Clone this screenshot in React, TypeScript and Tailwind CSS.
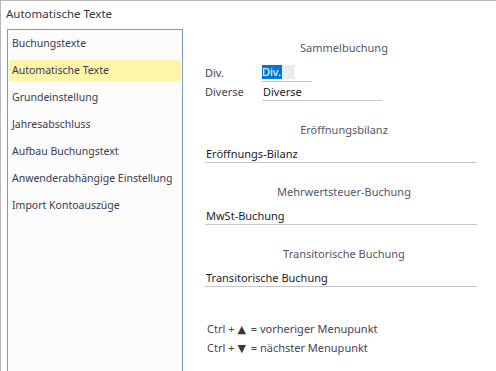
import React from 'react';

const menuItems = [
  'Buchungstexte',
  'Automatische Texte',
  'Grundeinstellung',
  'Jahresabschluss',
  'Aufbau Buchungstext',
  'Anwenderabhängige Einstellung',
  'Import Kontoauszüge',
];

const SectionTitle: React.FC<{ title: string; className?: string }> = ({ title, className = '' }) => (
  <div className={`h-[16px] w-[278px] shrink-0 text-center leading-[16px] text-[#555566] ${className}`}>{title}</div>
);

const Field: React.FC<{ value: string; className?: string }> = ({ value, className = '' }) => (
  <div className={`flex h-[19px] w-[272px] shrink-0 items-end border-b border-[#c6c6c6] text-[#1b1b2b] ${className}`}>
    <span className="pl-[1px] leading-[16px]">{value}</span>
  </div>
);

const Arrow: React.FC<{ glyph: string }> = ({ glyph }) => (
  <span className="ml-[3px] mr-[2px] font-['DejaVu_Sans',sans-serif] text-[11px] text-[#3a3a3a]">{glyph}</span>
);

export default function App() {
  return (
    <div className="flex h-[371px] w-[496px] flex-col overflow-hidden border-t border-l border-[#b8b8b8] bg-white font-['Noto_Sans',sans-serif] text-[11px] whitespace-nowrap">
      {/* Window caption */}
      <div className="h-[28px] shrink-0 pl-[5px] pt-[5px] text-[11.5px] leading-[16px] text-[#333344]">Automatische Texte</div>

      <div className="flex min-h-0 flex-1">
        {/* Menu list */}
        <div className="ml-[6px] w-[176px] shrink-0 border border-b-0 border-[#7a99c2] bg-[#fcfcfc] text-[10.5px]">
          {menuItems.map((item, i) => (
            <div key={item} className="flex h-[27px] items-center px-[1px]">
              <div
                className={`flex h-[21px] w-full items-center rounded-[2px] px-[3px] text-[#3a3a50] ${
                  i === 1 ? 'bg-[#fff5a8]' : ''
                }`}
              >
                {item}
              </div>
            </div>
          ))}
        </div>

        {/* Settings panel */}
        <div className="flex flex-col pl-[22px]">
          <SectionTitle title="Sammelbuchung" className="mt-[11px]" />

          <div className="mt-[7px] flex h-[19px] shrink-0 items-end">
            <span className="w-[57px] pb-[1px] leading-[16px] text-[#444455]">Div.</span>
            <div className="flex h-[19px] w-[50px] items-end border-b border-[#c6c6c6]">
              <div className="mb-[2px] flex h-[14px] w-[33px] items-center bg-[#ececec]">
                <span className="h-[14px] bg-[#0078d7] pr-[1px] leading-[14px] text-white">Div.</span>
              </div>
            </div>
          </div>
          <div className="flex h-[19px] shrink-0 items-end">
            <span className="w-[57px] pb-[1px] leading-[16px] text-[#444455]">Diverse</span>
            <div className="flex h-[19px] w-[120px] items-end border-b border-[#c6c6c6] text-[#1b1b2b]">
              <span className="pl-[1px] leading-[16px]">Diverse</span>
            </div>
          </div>

          <SectionTitle title="Eröffnungsbilanz" className="mt-[21px]" />
          <Field value="Eröffnungs-Bilanz" className="mt-[6px]" />

          <SectionTitle title="Mehrwertsteuer-Buchung" className="mt-[21px]" />
          <Field value="MwSt-Buchung" className="mt-[6px]" />

          <SectionTitle title="Transitorische Buchung" className="mt-[21px]" />
          <Field value="Transitorische Buchung" className="mt-[6px]" />

          <div className="mt-[32px] shrink-0 pl-[2px] text-[#444455]">
            <div className="h-[19px] leading-[19px]">
              Ctrl +<Arrow glyph="▲" /> = vorheriger Menupunkt
            </div>
            <div className="h-[19px] leading-[19px]">
              Ctrl +<Arrow glyph="▼" /> = nächster Menupunkt
            </div>
          </div>
        </div>
      </div>
    </div>
  );
}
